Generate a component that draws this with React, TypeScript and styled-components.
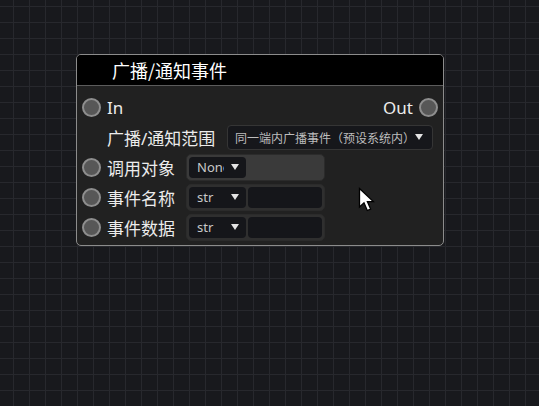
import React from "react";
import styled, { createGlobalStyle } from "styled-components";

const Global = createGlobalStyle`
  html, body {
    margin: 0;
    padding: 0;
    width: 100%;
    height: 100%;
    overflow: hidden;
  }
  body {
    background-color: #18191d;
    background-image:
      linear-gradient(to right, #27282d 1px, transparent 1px),
      linear-gradient(to bottom, #27282d 1px, transparent 1px);
    background-size: 16px 16px;
    background-position: 13px 6px;
    font-family: "Noto Sans", "Noto Sans CJK SC", sans-serif;
  }
  #root { height: 100%; }
`;

const Canvas = styled.div`
  position: relative;
  width: 100%;
  height: 100%;
`;

const Node = styled.div`
  position: absolute;
  left: 76px;
  top: 54px;
  width: 368px;
  box-sizing: border-box;
  border: 1px solid #8c8c8c;
  border-radius: 5px;
  background: #212121;
  display: flex;
  flex-direction: column;
`;

const Title = styled.div`
  height: 30px;
  background: #000;
  border-bottom: 1px solid #5c5c5c;
  border-radius: 4px 4px 0 0;
  padding-left: 35px;
  color: #fff;
  font-size: 18px;
  line-height: 30px;
  font-family: "Noto Sans CJK SC", sans-serif;
`;

const Body = styled.div`
  padding: 6px 0 3px 0;
  display: flex;
  flex-direction: column;
`;

const Row = styled.div`
  height: 30px;
  display: flex;
  align-items: center;
  padding: 0 5px 0 5px;
`;

const Pin = styled.div<{ $hidden?: boolean }>`
  width: 19px;
  height: 19px;
  box-sizing: border-box;
  border-radius: 50%;
  border: 2px solid #8e8e8e;
  background: #575757;
  flex: none;
  visibility: ${(p) => (p.$hidden ? "hidden" : "visible")};
`;

const Label = styled.span<{ $w?: number }>`
  color: #ececec;
  font-size: 17px;
  font-family: "Noto Sans", "Noto Sans CJK SC", sans-serif;
  margin: 0 6px;
  white-space: nowrap;
  width: ${(p) => (p.$w ? `${p.$w}px` : "auto")};
  flex: none;
`;

const Spacer = styled.div`
  flex: 1;
`;

const WideSelect = styled.div`
  margin-left: auto;
  margin-right: 5px;
  width: 206px;
  height: 25px;
  box-sizing: border-box;
  background: #16171b;
  border: 1px solid #353535;
  border-radius: 4px;
  display: flex;
  align-items: center;
  padding: 0 9px 0 7px;
  color: #bdbdbd;
  font-size: 12px;
  font-family: "Noto Sans CJK SC", sans-serif;
`;

const SelectText = styled.span`
  flex: 1;
  min-width: 0;
  overflow: hidden;
  white-space: nowrap;
`;

const Caret = styled.span`
  width: 0;
  height: 0;
  border-left: 4px solid transparent;
  border-right: 4px solid transparent;
  border-top: 6px solid #e4e4e4;
  flex: none;
`;

const Field = styled.div<{ $bg: string }>`
  width: 139px;
  height: 27px;
  box-sizing: border-box;
  background: ${(p) => p.$bg};
  border: 1px solid #2b2b2b;
  border-radius: 5px;
  padding: 2px;
  display: flex;
  gap: 2px;
`;

const TypeSelect = styled.div`
  width: 57px;
  height: 21px;
  box-sizing: border-box;
  background: #15161a;
  border-radius: 4px;
  display: flex;
  align-items: center;
  padding: 0 7px 0 8px;
  gap: 7px;
  color: #c8c8c8;
  font-size: 13px;
  font-family: "Noto Sans", sans-serif;
`;

const TextInput = styled.div`
  flex: 1;
  height: 21px;
  background: #15161a;
  border-radius: 4px;
`;

const Cursor = styled.svg`
  position: absolute;
  left: 358px;
  top: 187px;
`;

const ParamRow = ({ label, type, input, bg }: { label: string; type: string; input: boolean; bg: string }) => (
  <Row>
    <Pin />
    <Label $w={73}>{label}</Label>
    <Field $bg={bg}>
      <TypeSelect>
        <SelectText>{type}</SelectText>
        <Caret />
      </TypeSelect>
      {input && <TextInput />}
    </Field>
  </Row>
);

export default function App() {
  return (
    <>
      <Global />
      <Canvas>
        <Node>
          <Title>广播/通知事件</Title>
          <Body>
            <Row>
              <Pin />
              <Label>In</Label>
              <Spacer />
              <Label>Out</Label>
              <Pin />
            </Row>
            <Row>
              <Pin $hidden />
              <Label>广播/通知范围</Label>
              <WideSelect>
                <SelectText>同一端内广播事件（预设系统内）</SelectText>
                <Caret />
              </WideSelect>
            </Row>
            <ParamRow label="调用对象" type="None" input={false} bg="#3a3a3a" />
            <ParamRow label="事件名称" type="str" input bg="#2f2f2f" />
            <ParamRow label="事件数据" type="str" input bg="#2f2f2f" />
          </Body>
        </Node>
        <Cursor width="20" height="28" viewBox="0 0 20 28">
          <path
            d="M1.5 1.5 L1.5 20 L6 15.8 L9.3 23.5 L12.6 22.1 L9.4 14.6 L15.3 14.6 Z"
            fill="#fff"
            stroke="#000"
            strokeWidth="1.3"
            strokeLinejoin="miter"
          />
        </Cursor>
      </Canvas>
    </>
  );
}
